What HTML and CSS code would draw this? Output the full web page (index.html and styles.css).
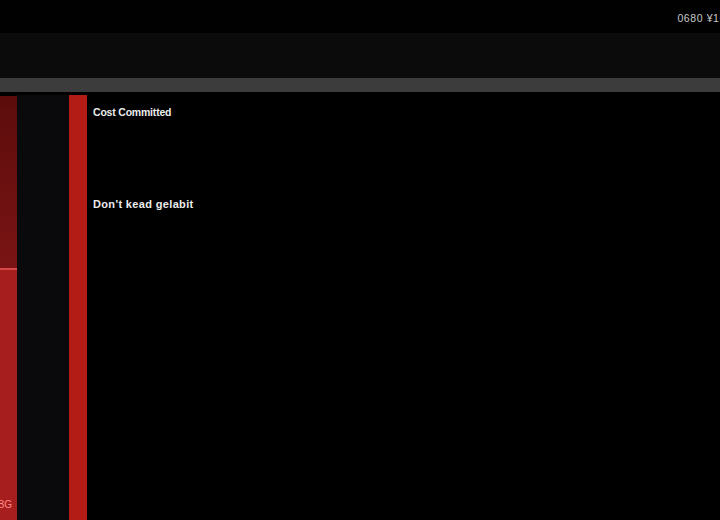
FILE: index.html
```html
<!DOCTYPE html>
<html>
<head>
<meta charset="utf-8">
<link rel="stylesheet" href="styles.css">
</head>
<body>
<header class="topbar">
  <span class="clock">0680 ¥16</span>
</header>
<div class="band"></div>
<div class="rule"></div>
<main class="main">
  <aside class="side">
    <div class="side-top"></div>
    <div class="side-bottom"><span class="side-label">ABG</span></div>
  </aside>
  <div class="gutter"></div>
  <div class="marker"></div>
  <section class="content">
    <p class="item item-first">Cost Committed</p>
    <p class="item item-second">Don't kead gelabit</p>
  </section>
</main>
</body>
</html>
```
FILE: styles.css
```css
html, body {
  margin: 0;
  padding: 0;
  background: #000;
  height: 520px;
  overflow: hidden;
  font-family: "Liberation Sans", Arial, sans-serif;
}
.topbar {
  height: 33px;
  background: #010101;
  display: flex;
  align-items: center;
  justify-content: flex-end;
  padding-top: 2px;
  box-sizing: border-box;
}
.clock {
  color: #c8c8c8;
  font-size: 10.5px;
  margin-right: -6px;
  letter-spacing: 0.6px;
}
.band {
  height: 45px;
  background: #0b0b0b;
}
.rule {
  height: 14px;
  background: #3d3c3c;
}
.main {
  display: flex;
  height: 428px;
  padding-top: 3px;
  box-sizing: border-box;
}
.side {
  width: 17px;
  margin-top: 1px;
  display: flex;
  flex-direction: column;
}
.side-top {
  height: 172px;
  background: linear-gradient(180deg, #5c0c0c 0%, #7a1414 100%);
  border-bottom: 2px solid #d84848;
}
.side-bottom {
  flex: 1;
  background: #a71e1e;
  display: flex;
  align-items: flex-end;
  overflow: hidden;
}
.side-label {
  color: #ff8a8a;
  font-size: 10px;
  margin-left: -9px;
  margin-bottom: 10px;
}
.gutter {
  width: 52px;
  background: #0a0a0c;
}
.marker {
  width: 18px;
  background: #b21c14;
}
.content {
  flex: 1;
  padding-left: 6px;
}
.item {
  margin: 0;
  color: #ececec;
  font-weight: bold;
}
.item-first {
  margin-top: 11px;
  font-size: 10.5px;
  letter-spacing: -0.2px;
}
.item-second {
  margin-top: 80px;
  font-size: 11px;
  letter-spacing: 0.35px;
}
```
